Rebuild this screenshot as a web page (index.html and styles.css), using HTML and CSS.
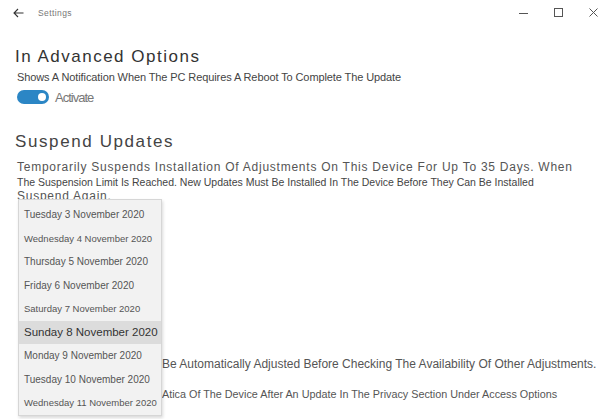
FILE: index.html
```html
<!DOCTYPE html>
<html>
<head>
    <title>Settings</title>
    <link rel="stylesheet" href="styles.css">
</head>
<body>
    <div class="titlebar">
        <span class="back">
            <svg width="11" height="10" viewBox="0 0 11 10"><path d="M5 1 L1 5 L5 9 M1 5 H10.5" fill="none" stroke="#333" stroke-width="1.1"/></svg>
        </span>
        <span class="app-name">Settings</span>
        <div class="controls">
            <span class="ctl"><svg width="9" height="10" viewBox="0 0 9 10"><path d="M0 5.5 H9" stroke="#555" stroke-width="1"/></svg></span>
            <span class="ctl"><svg width="9" height="10" viewBox="0 0 9 10"><rect x="0.5" y="0.5" width="8" height="8" fill="none" stroke="#555" stroke-width="1"/></svg></span>
            <span class="ctl"><svg width="9" height="10" viewBox="0 0 9 10"><path d="M0.5 0.5 L8.5 8.5 M8.5 0.5 L0.5 8.5" stroke="#555" stroke-width="1"/></svg></span>
        </div>
    </div>

    <div class="page">
        <h1>In Advanced Options</h1>
        <p class="note">Shows A Notification When The PC Requires A Reboot To Complete The Update</p>
        <div class="toggle-row">
            <span class="toggle"><span class="knob"></span></span>
            <span class="toggle-label">Activate</span>
        </div>

        <h2>Suspend Updates</h2>
        <p class="desc">
            <span class="big">Temporarily Suspends Installation Of Adjustments On This Device For Up To 35 Days. When</span><br>
            The Suspension Limit Is Reached. New Updates Must Be Installed In The Device Before They Can Be Installed<br>
            <span class="big">Suspend Again.</span>
        </p>

        <p class="under first">Be Automatically Adjusted Before Checking The Availability Of Other Adjustments.</p>
        <p class="under">Atica Of The Device After An Update In The Privacy Section Under Access Options</p>
    </div>

    <div class="dropdown">
        <div class="item">Tuesday 3 November 2020</div>
        <div class="item long">Wednesday 4 November 2020</div>
        <div class="item">Thursday 5 November 2020</div>
        <div class="item">Friday 6 November 2020</div>
        <div class="item long">Saturday 7 November 2020</div>
        <div class="item selected">Sunday 8 November 2020</div>
        <div class="item">Monday 9 November 2020</div>
        <div class="item">Tuesday 10 November 2020</div>
        <div class="item long">Wednesday 11 November 2020</div>
    </div>
</body>
</html>
```

FILE: styles.css
```css
body { margin: 0; background: #fff; font-family: "Liberation Sans", Arial, sans-serif; color: #333; position: relative; height: 419px; overflow: hidden; }
.titlebar { display: flex; align-items: center; height: 26px; padding-left: 13px; }
.back { display: flex; width: 11px; }
.app-name { margin-left: 14px; font-size: 8.5px; color: #777; letter-spacing: 0.4px; }
.controls { margin-left: auto; display: flex; gap: 26px; padding-right: 12px; }
.ctl { display: flex; width: 9px; height: 10px; }
.page { padding-left: 15px; }
h1 { margin: 20px 0 0; font-size: 17px; font-weight: normal; line-height: 22px; color: #333; letter-spacing: 1.5px; }
.note { margin: 2px 0 0 2px; font-size: 11px; line-height: 14px; color: #444; letter-spacing: -0.1px; }
.toggle-row { display: flex; align-items: center; gap: 6px; margin-top: 5px; height: 16px; padding-left: 2px; }
.toggle { display: flex; align-items: center; justify-content: flex-end; width: 32px; height: 14px; border-radius: 7px; background: #2b86c5; padding-right: 3px; box-sizing: border-box; }
.knob { width: 8px; height: 8px; border-radius: 50%; background: #fff; }
.toggle-label { font-size: 13px; color: #777; letter-spacing: -1px; }
h2 { margin: 26px 0 0; font-size: 17px; font-weight: normal; line-height: 22px; color: #444; letter-spacing: 1.6px; }
.desc { margin: 7px 0 0 2px; font-size: 10.5px; line-height: 14.5px; color: #444; }
.desc .big { font-size: 12px; color: #555; letter-spacing: 0.75px; }
.under { margin: 0; padding-left: 147px; font-size: 12px; line-height: 14px; color: #555; white-space: nowrap; }
.under.first { margin-top: 153px; }
.under + .under { margin-top: 16px; font-size: 10.8px; }
.dropdown { position: absolute; left: 18px; top: 199px; width: 144px; height: 217px; box-sizing: border-box; padding-top: 3px; background: #f2f2f2; border: 1px solid #d6d6d6; box-shadow: 1px 2px 3px rgba(0,0,0,0.15); }
.item { height: 23.5px; line-height: 23.5px; padding-left: 5px; font-size: 10px; color: #555; white-space: nowrap; }
.item.long { font-size: 9.5px; }
.item.selected { background: #dcdcdc; color: #333; font-size: 11.5px; }
```
